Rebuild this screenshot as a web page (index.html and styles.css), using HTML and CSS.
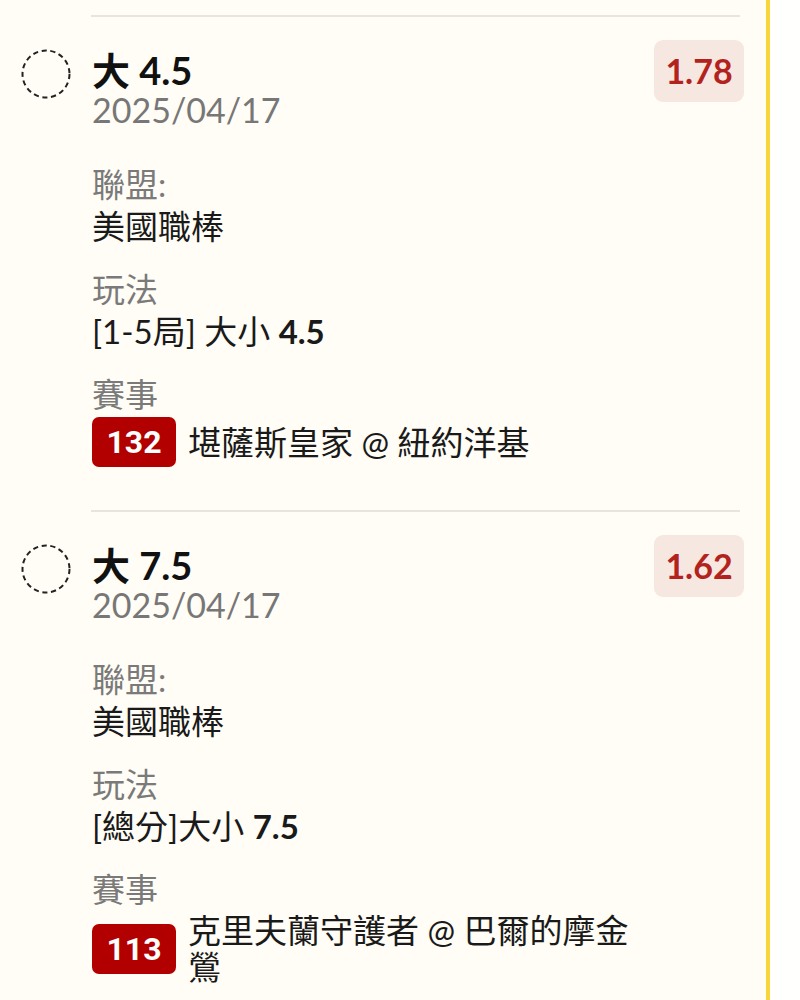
FILE: index.html
```html
<html>
	<head>
		<title>注單</title>
		<meta name="viewport" content="width=device-width, initial-scale=1">
		<link rel="stylesheet" href="styles.css">
	</head>
	<body>
		<div class="panel">
			<div class="bet">
				<div class="divider"></div>
				<div class="bet-row">
					<div class="check">
						<svg width="50" height="50" viewBox="0 0 50 50"><circle cx="25" cy="25" r="23.5" fill="none" stroke="#222" stroke-width="2" stroke-dasharray="5.2 3.6"/></svg>
					</div>
					<div class="info">
						<p class="bet-title">大 4.5</p>
						<p class="bet-date">2025/04/17</p>
						<div class="field">
							<p class="field-label">聯盟:</p>
							<p class="field-value">美國職棒</p>
						</div>
						<div class="field">
							<p class="field-label">玩法</p>
							<p class="field-value">[1-5局] 大小 <b>4.5</b></p>
						</div>
						<div class="field">
							<p class="field-label">賽事</p>
							<div class="match">
								<span class="match-no">132</span>
								<span class="match-name">堪薩斯皇家 @ 紐約洋基</span>
							</div>
						</div>
					</div>
					<div class="odds">1.78</div>
				</div>
			</div>
			<div class="bet">
				<div class="divider"></div>
				<div class="bet-row">
					<div class="check">
						<svg width="50" height="50" viewBox="0 0 50 50"><circle cx="25" cy="25" r="23.5" fill="none" stroke="#222" stroke-width="2" stroke-dasharray="5.2 3.6"/></svg>
					</div>
					<div class="info">
						<p class="bet-title">大 7.5</p>
						<p class="bet-date">2025/04/17</p>
						<div class="field">
							<p class="field-label">聯盟:</p>
							<p class="field-value">美國職棒</p>
						</div>
						<div class="field">
							<p class="field-label">玩法</p>
							<p class="field-value">[總分]大小 <b>7.5</b></p>
						</div>
						<div class="field">
							<p class="field-label">賽事</p>
							<div class="match">
								<span class="match-no">113</span>
								<span class="match-name">克里夫蘭守護者 @ 巴爾的摩金鶯</span>
							</div>
						</div>
					</div>
					<div class="odds">1.62</div>
				</div>
			</div>
		</div>
	</body>
</html>
```

FILE: styles.css
```css
*{
	box-sizing: border-box;
}
body{
	margin: 0;
	padding: 0;
	background-color: #fffffd;
	font-family: "Lato", "Noto Sans CJK TC", sans-serif;
}
p{
	margin: 0;
}
.panel{
	width: 770px;
	min-height: 1000px;
	padding-top: 15px;
	background-color: #fffdf5;
	border-right: 4px solid #f8d53c;
}
.divider{
	height: 2px;
	margin: 0 26px 0 91px;
	background-color: #e8e5dd;
}
.bet-row{
	display: flex;
	align-items: flex-start;
	padding: 23px 22px 43px 21px;
}
.check{
	width: 50px;
	height: 50px;
	margin-top: 9px;
	margin-right: 21px;
	flex-shrink: 0;
}
.check svg{
	display: block;
}
.info{
	flex: 1;
	padding-top: 10px;
	padding-right: 10px;
}
.bet-title{
	font-size: 38px;
	line-height: 40px;
	font-weight: bold;
	color: #111;
}
.bet-date{
	font-size: 34px;
	line-height: 40px;
	color: #777;
}
.field{
	margin-top: 21px;
}
.bet-date + .field{
	margin-top: 33px;
}
.field-label{
	font-size: 33px;
	line-height: 42px;
	color: #7a7a7a;
}
.field-value{
	font-size: 33px;
	line-height: 42px;
	color: #1a1a1a;
}
.field-value b{
	font-weight: bold;
}
.match{
	display: flex;
	align-items: center;
	margin-top: 2px;
}
.match-no{
	flex-shrink: 0;
	width: 84px;
	height: 50px;
	margin-right: 12px;
	border-radius: 7px;
	background-color: #b20000;
	color: #fff;
	font-family: "Roboto", sans-serif;
	font-weight: bold;
	font-size: 32px;
	line-height: 50px;
	text-align: center;
}
.match-name{
	font-size: 33px;
	line-height: 37px;
	color: #1a1a1a;
}
.odds{
	flex-shrink: 0;
	width: 90px;
	height: 62px;
	border-radius: 9px;
	background-color: #f6e7e0;
	color: #b3231d;
	font-size: 34px;
	font-weight: bold;
	line-height: 62px;
	text-align: center;
}
```
